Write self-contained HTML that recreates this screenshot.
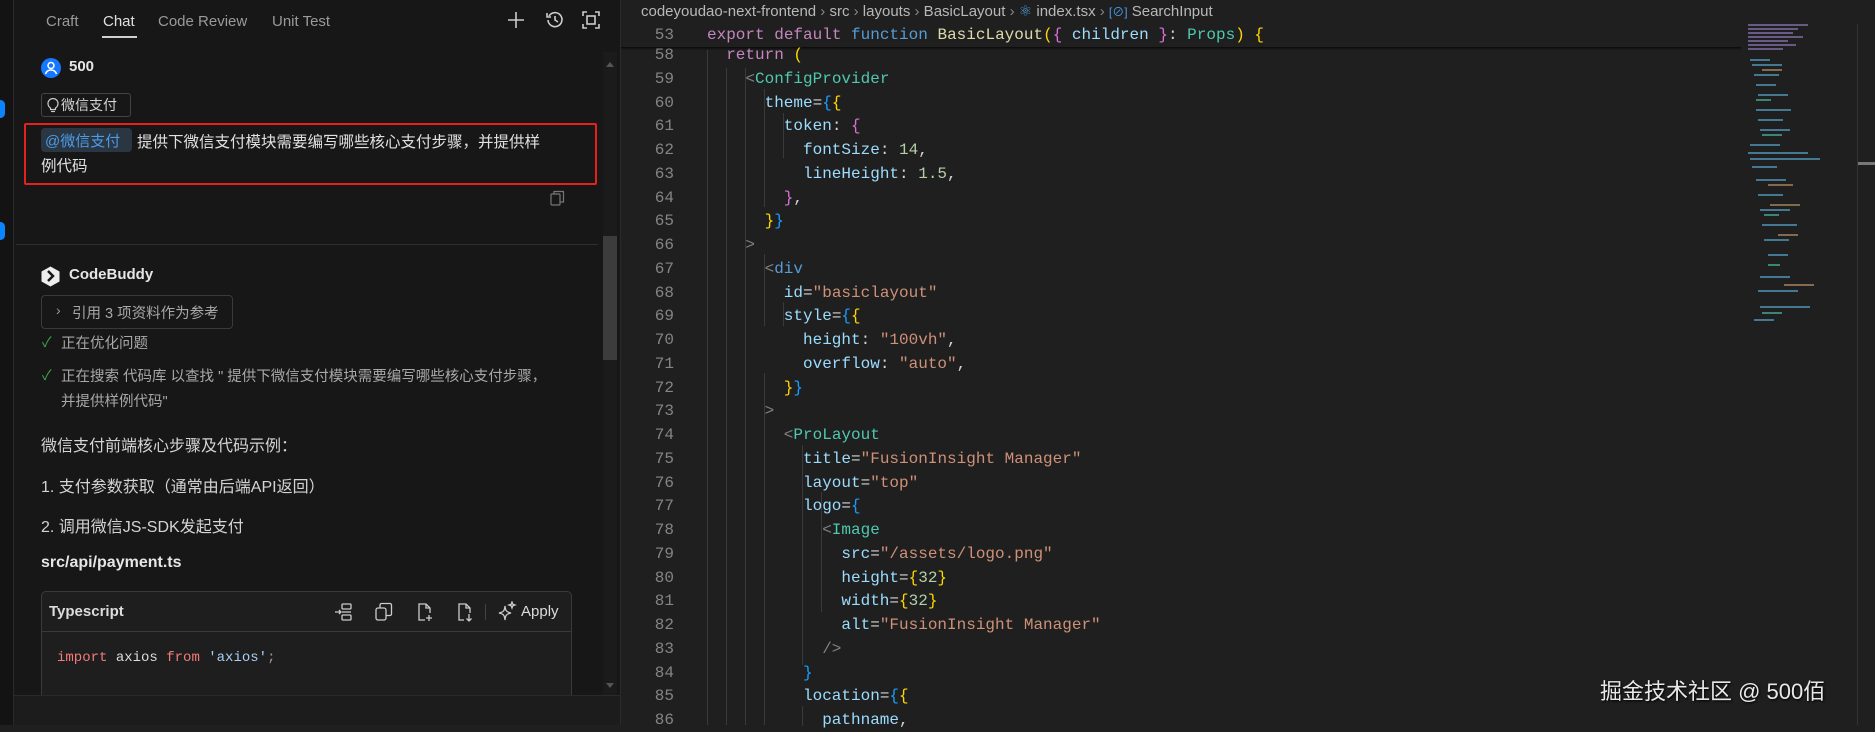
<!DOCTYPE html>
<html><head><meta charset="utf-8"><style>
*{margin:0;padding:0;box-sizing:border-box}
body{width:1875px;height:725px;overflow:hidden;background:#1f1f1f;position:relative;font-family:"Liberation Sans","Noto Sans CJK SC",sans-serif;color:#cccccc}
.a{position:absolute;white-space:nowrap}
#left{position:absolute;left:0;top:0;width:620px;height:725px;background:#171717}
.cn{font-size:16px;color:#d4d4d4}
.code{font-family:"Liberation Mono",monospace;font-size:16px;line-height:24px;white-space:pre}
.ln{position:absolute;width:40px;text-align:right;left:634px;color:#858585;font-family:"Liberation Mono",monospace;font-size:16px;line-height:24px}
.k{color:#c586c0}.f{color:#569cd6}.fn{color:#dcdcaa}.v{color:#9cdcfe}.t{color:#4ec9b0}.s{color:#ce9178}.n{color:#b5cea8}.g{color:#808080}.y{color:#ffd700}.p{color:#da70d6}.b{color:#179fff}.w{color:#d4d4d4}
.guide{position:absolute;width:1px;background:#3a3a3a}
</style></head><body>
<div id="left">
  <div class="a" style="left:0;top:0;width:14px;height:725px;background:#131313;border-right:1px solid #2a2a2a"></div>
  <div class="a" style="left:-4px;top:100px;width:9px;height:18px;border-radius:5px;background:#0a84ff"></div>
  <div class="a" style="left:-4px;top:222px;width:9px;height:18px;border-radius:5px;background:#0a84ff"></div>
  <div class="a" style="left:46px;top:13px;font-size:15px;color:#9a9a9a">Craft</div>
  <div class="a" style="left:103px;top:13px;font-size:15px;color:#e0e0e0">Chat</div>
  <div class="a" style="left:102px;top:36px;width:35px;height:2px;background:#d0d0d0"></div>
  <div class="a" style="left:158px;top:13px;font-size:15px;color:#9a9a9a">Code Review</div>
  <div class="a" style="left:272px;top:13px;font-size:15px;color:#9a9a9a">Unit Test</div>
  <svg class="a" style="left:507px;top:11px" width="18" height="18" viewBox="0 0 18 18"><path d="M9 1v16M1 9h16" stroke="#ccc" stroke-width="1.6"/></svg>
  <svg class="a" style="left:545px;top:10px" width="20" height="20" viewBox="0 0 20 20" fill="none" stroke="#ccc" stroke-width="1.6"><path d="M4 6A7 7 0 1 1 3 10"/><path d="M2 3v4h4"/><path d="M10 6v4l3 2"/></svg>
  <svg class="a" style="left:582px;top:11px" width="18" height="18" viewBox="0 0 18 18" fill="none" stroke="#ccc" stroke-width="1.6"><path d="M1 5V1h4M13 1h4v4M17 13v4h-4M5 17H1v-4"/><rect x="5" y="5" width="8" height="8"/></svg>
  <!-- scrollbar -->
  <div class="a" style="left:603px;top:52px;width:14px;height:643px;background:#1b1b1b"></div>
  <div class="a" style="left:603px;top:236px;width:14px;height:124px;background:#3c3c3c"></div>
  <div class="a" style="left:606px;top:62px;width:0;height:0;border-left:4px solid transparent;border-right:4px solid transparent;border-bottom:5px solid #555"></div>
  <div class="a" style="left:606px;top:683px;width:0;height:0;border-left:4px solid transparent;border-right:4px solid transparent;border-top:5px solid #555"></div>
  <!-- user -->
  <svg class="a" style="left:41px;top:58px" width="20" height="20" viewBox="0 0 20 20"><circle cx="10" cy="10" r="10" fill="#1677ff"/><circle cx="10" cy="7.5" r="3" fill="none" stroke="#fff" stroke-width="1.5"/><path d="M4.5 16c1-3 3-4 5.5-4s4.5 1 5.5 4" fill="none" stroke="#fff" stroke-width="1.5"/></svg>
  <div class="a" style="left:69px;top:58px;font-size:15px;font-weight:bold;color:#e6e6e6">500</div>
  <div class="a" style="left:41px;top:93px;width:90px;height:24px;border:1px solid #444;border-radius:3px"></div>
  <svg class="a" style="left:47px;top:98px" width="12" height="15" viewBox="0 0 12 15" fill="none" stroke="#ccc" stroke-width="1.2"><path d="M3.5 10C2 9 1 7.5 1 5.5a5 5 0 0 1 10 0C11 7.5 10 9 8.5 10v1.5h-5z"/><path d="M4 13.5h4"/></svg>
  <div class="a cn" style="left:61px;top:95px;font-size:14px">微信支付</div>
  <div class="a" style="left:24px;top:123px;width:573px;height:62px;border:2.5px solid #e6201c;border-radius:2px"></div>
  <div class="a" style="left:41px;top:128px;width:91px;height:24px;background:#2a3642;border-radius:4px"></div>
  <div class="a" style="left:45px;top:130px;font-size:15px;color:#4c9be8">@微信支付</div>
  <div class="a cn" style="left:137px;top:130px;font-size:15.5px;color:#e0e0e0">提供下微信支付模块需要编写哪些核心支付步骤，并提供样</div>
  <div class="a cn" style="left:41px;top:154px;font-size:15.5px;color:#e0e0e0">例代码</div>
  <svg class="a" style="left:550px;top:190px" width="15" height="16" viewBox="0 0 15 16" fill="none" stroke="#777" stroke-width="1.2"><rect x="1" y="4" width="9" height="11" rx="1"/><path d="M4 4V1.5h9.5V12H10"/></svg>
  <div class="a" style="left:16px;top:244px;width:582px;height:1px;background:#2e2e2e"></div>
  <!-- codebuddy -->
  <svg class="a" style="left:41px;top:266px" width="19" height="21" viewBox="0 0 19 21"><path d="M9.5 0.5L18.5 5.5V15.5L9.5 20.5L0.5 15.5V5.5Z" fill="#eee"/><path d="M7 5l5 5-5 5" fill="none" stroke="#171717" stroke-width="2.5"/></svg>
  <div class="a" style="left:69px;top:266px;font-size:15px;font-weight:bold;color:#e6e6e6">CodeBuddy</div>
  <div class="a" style="left:41px;top:295px;width:192px;height:34px;border:1px solid #3a3a3a;border-radius:4px"></div>
  <div class="a" style="left:56px;top:302px;font-size:14px;color:#999">›</div>
  <div class="a cn" style="left:72px;top:302px;font-size:14.5px;color:#a8a8a8">引用 3 项资料作为参考</div>
  <div class="a" style="left:42px;top:332px;font-size:14px;color:#3ea84a">✓</div>
  <div class="a cn" style="left:61px;top:332px;font-size:14.5px;color:#a8a8a8">正在优化问题</div>
  <div class="a" style="left:42px;top:365px;font-size:14px;color:#3ea84a">✓</div>
  <div class="a cn" style="left:61px;top:365px;font-size:14.5px;color:#a8a8a8">正在搜索 代码库 以查找 " 提供下微信支付模块需要编写哪些核心支付步骤，</div>
  <div class="a cn" style="left:61px;top:390px;font-size:14.5px;color:#a8a8a8">并提供样例代码"</div>
  <div class="a cn" style="left:41px;top:432px">微信支付前端核心步骤及代码示例：</div>
  <div class="a cn" style="left:41px;top:473px">1. 支付参数获取（通常由后端API返回）</div>
  <div class="a cn" style="left:41px;top:513px">2. 调用微信JS-SDK发起支付</div>
  <div class="a" style="left:41px;top:554px;font-size:16px;font-weight:bold;color:#e6e6e6">src/api/payment.ts</div>
  <div class="a" style="left:41px;top:591px;width:531px;height:120px;border:1px solid #3a3a3a;border-radius:5px;background:#1e1e1e"></div>
  <div class="a" style="left:42px;top:631px;width:529px;height:1px;background:#3a3a3a"></div>
  <div class="a" style="left:49px;top:603px;font-size:15px;font-weight:bold;color:#dcdcdc">Typescript</div>
  <svg class="a" style="left:334px;top:602px" width="20" height="20" viewBox="0 0 20 20" fill="none" stroke="#ccc" stroke-width="1.3"><path d="M1 10h6M5 8l2 2-2 2"/><rect x="8" y="2" width="9" height="5" rx="1"/><rect x="8" y="13" width="9" height="5" rx="1"/><path d="M8 10h9"/></svg>
  <svg class="a" style="left:375px;top:602px" width="18" height="20" viewBox="0 0 18 20" fill="none" stroke="#ccc" stroke-width="1.3"><rect x="1" y="6" width="10" height="12" rx="2"/><path d="M5 6V3a1.5 1.5 0 0 1 1.5-1.5H15A1.5 1.5 0 0 1 16.5 3v9a1.5 1.5 0 0 1-1.5 1.5h-4"/></svg>
  <svg class="a" style="left:416px;top:602px" width="18" height="20" viewBox="0 0 18 20" fill="none" stroke="#ccc" stroke-width="1.3"><path d="M9 18H3V2h7l4 4v5"/><path d="M10 2v4h4"/><path d="M13 13v6M10 16h6"/></svg>
  <svg class="a" style="left:456px;top:602px" width="18" height="20" viewBox="0 0 18 20" fill="none" stroke="#ccc" stroke-width="1.3"><path d="M8 18H3V2h7l4 4v5"/><path d="M10 2v4h4"/><path d="M13 12v7M10.5 16.5l2.5 2.5 2.5-2.5"/></svg>
  <div class="a" style="left:485px;top:604px;width:1px;height:16px;background:#444"></div>
  <svg class="a" style="left:497px;top:601px" width="20" height="22" viewBox="0 0 20 22" fill="none" stroke="#ccc" stroke-width="1.3"><path d="M8 5C8.5 10 9.5 11 14 12 9.5 13 8.5 14 8 19 7.5 14 6.5 13 2 12 6.5 11 7.5 10 8 5Z"/><path d="M15 1l.8 2.2L18 4l-2.2.8L15 7l-.8-2.2L12 4l2.2-.8Z"/></svg>
  <div class="a" style="left:521px;top:603px;font-size:15px;color:#dcdcdc">Apply</div>
  <div class="a" style="left:57px;top:650px;font-family:'Liberation Mono',monospace;font-size:14px;white-space:pre"><span style="color:#f27a7a">import</span><span style="color:#ddd"> axios </span><span style="color:#f27a7a">from</span> <span style="color:#a6d0f5">'axios'</span><span style="color:#999">;</span></div>
  <div class="a" style="left:14px;top:695px;width:606px;height:30px;background:#1c1c1c;border-top:1px solid #2a2a2a"></div>
</div>
<div class="a" style="left:620px;top:0;width:1px;height:725px;background:#2b2b2b"></div>
<!-- breadcrumb -->
<div class="a" style="left:641px;top:2px;font-size:15px;color:#b8b8b8">codeyoudao-next-frontend <span style="color:#888">›</span> src <span style="color:#888">›</span> layouts <span style="color:#888">›</span> BasicLayout <span style="color:#888">›</span> <span style="color:#4aa3df">⚛</span> index.tsx <span style="color:#888">›</span> <span style="color:#4c9be8;font-size:12px">[⊘]</span> SearchInput</div>
<div class="a" style="left:621px;top:47px;width:1120px;height:3px;background:linear-gradient(#0a0a0a,#1f1f1f)"></div>
<!-- guides -->
<div class="guide" style="left:707px;top:50px;height:675px"></div>
<div class="guide" style="left:726px;top:68px;height:657px"></div>
<div class="guide" style="left:745px;top:68px;height:657px"></div>
<div class="guide" style="left:764px;top:89px;height:118px"></div>
<div class="guide" style="left:783px;top:113px;height:45px"></div>
<div class="guide" style="left:764px;top:254px;height:72px"></div>
<div class="guide" style="left:783px;top:302px;height:24px"></div>
<div class="guide" style="left:764px;top:373px;height:352px"></div>
<div class="guide" style="left:802px;top:445px;height:220px"></div>
<div class="guide" style="left:821px;top:492px;height:120px"></div>
<div class="guide" style="left:802px;top:706px;height:20px"></div>
<div class="ln" style="top:23px">53</div>
<div class="a code" style="left:707px;top:23px"><span class="k">export</span> <span class="k">default</span> <span class="f">function</span> <span class="fn">BasicLayout</span><span class="y">(</span><span class="p">{</span> <span class="v">children</span> <span class="p">}</span><span class="w">:</span> <span class="t">Props</span><span class="y">)</span> <span class="y">{</span></div>
<div id="code"></div>
<!-- minimap -->
<svg class="a" style="left:1748px;top:24px" width="80" height="305">
<g fill="#7a6aa0" opacity=".8"><rect x="0" y="0" width="60" height="2"/><rect x="0" y="4" width="50" height="2"/><rect x="0" y="8" width="45" height="2"/><rect x="0" y="12" width="55" height="2"/><rect x="0" y="16" width="40" height="2"/><rect x="0" y="20" width="48" height="2"/><rect x="0" y="24" width="35" height="2"/></g>
<g fill="#4e8fb0" opacity=".8"><rect x="2" y="35" width="20" height="2"/><rect x="4" y="40" width="30" height="2"/><rect x="6" y="50" width="25" height="2"/><rect x="8" y="60" width="20" height="2"/><rect x="10" y="70" width="30" height="2"/><rect x="8" y="85" width="35" height="2"/><rect x="10" y="95" width="25" height="2"/><rect x="12" y="105" width="30" height="2"/><rect x="2" y="120" width="30" height="2"/><rect x="0" y="128" width="60" height="2"/><rect x="2" y="134" width="70" height="2"/><rect x="4" y="142" width="25" height="2"/><rect x="8" y="155" width="30" height="2"/><rect x="10" y="170" width="25" height="2"/><rect x="12" y="185" width="30" height="2"/><rect x="14" y="200" width="35" height="2"/><rect x="16" y="215" width="25" height="2"/><rect x="20" y="230" width="20" height="2"/><rect x="12" y="252" width="30" height="2"/><rect x="10" y="266" width="40" height="2"/><rect x="12" y="282" width="50" height="2"/><rect x="6" y="295" width="20" height="2"/></g>
<g fill="#b08a60" opacity=".7"><rect x="14" y="45" width="20" height="2"/><rect x="20" y="160" width="25" height="2"/><rect x="22" y="180" width="30" height="2"/><rect x="30" y="210" width="20" height="2"/><rect x="36" y="260" width="30" height="2"/></g>
<g fill="#4ec9b0" opacity=".6"><rect x="8" y="75" width="15" height="2"/><rect x="14" y="110" width="20" height="2"/><rect x="16" y="190" width="15" height="2"/><rect x="20" y="240" width="12" height="2"/><rect x="14" y="288" width="20" height="2"/></g>
</svg>
<div class="a" style="left:1857px;top:24px;width:1px;height:701px;background:#333"></div>
<div class="a" style="left:1858px;top:162px;width:17px;height:3px;background:#777"></div>
<div class="a" style="left:1600px;top:674px;font-size:22px;color:#e8e8e8;text-shadow:1px 1px 2px #000">掘金技术社区 @ 500佰</div>
<script>
var L=[
[58,2,'<span class="k">return</span> <span class="y">(</span>'],
[59,4,'<span class="g">&lt;</span><span class="t">ConfigProvider</span>'],
[60,6,'<span class="v">theme</span><span class="w">=</span><span class="b">{</span><span class="y">{</span>'],
[61,8,'<span class="v">token</span><span class="w">: </span><span class="p">{</span>'],
[62,10,'<span class="v">fontSize</span><span class="w">: </span><span class="n">14</span><span class="w">,</span>'],
[63,10,'<span class="v">lineHeight</span><span class="w">: </span><span class="n">1.5</span><span class="w">,</span>'],
[64,8,'<span class="p">}</span><span class="w">,</span>'],
[65,6,'<span class="y">}</span><span class="b">}</span>'],
[66,4,'<span class="g">&gt;</span>'],
[67,6,'<span class="g">&lt;</span><span class="f">div</span>'],
[68,8,'<span class="v">id</span><span class="w">=</span><span class="s">"basiclayout"</span>'],
[69,8,'<span class="v">style</span><span class="w">=</span><span class="b">{</span><span class="y">{</span>'],
[70,10,'<span class="v">height</span><span class="w">: </span><span class="s">"100vh"</span><span class="w">,</span>'],
[71,10,'<span class="v">overflow</span><span class="w">: </span><span class="s">"auto"</span><span class="w">,</span>'],
[72,8,'<span class="y">}</span><span class="b">}</span>'],
[73,6,'<span class="g">&gt;</span>'],
[74,8,'<span class="g">&lt;</span><span class="t">ProLayout</span>'],
[75,10,'<span class="v">title</span><span class="w">=</span><span class="s">"FusionInsight Manager"</span>'],
[76,10,'<span class="v">layout</span><span class="w">=</span><span class="s">"top"</span>'],
[77,10,'<span class="v">logo</span><span class="w">=</span><span class="b">{</span>'],
[78,12,'<span class="g">&lt;</span><span class="t">Image</span>'],
[79,14,'<span class="v">src</span><span class="w">=</span><span class="s">"/assets/logo.png"</span>'],
[80,14,'<span class="v">height</span><span class="w">=</span><span class="y">{</span><span class="n">32</span><span class="y">}</span>'],
[81,14,'<span class="v">width</span><span class="w">=</span><span class="y">{</span><span class="n">32</span><span class="y">}</span>'],
[82,14,'<span class="v">alt</span><span class="w">=</span><span class="s">"FusionInsight Manager"</span>'],
[83,12,'<span class="g">/&gt;</span>'],
[84,10,'<span class="b">}</span>'],
[85,10,'<span class="v">location</span><span class="w">=</span><span class="b">{</span><span class="y">{</span>'],
[86,12,'<span class="v">pathname</span><span class="w">,</span>']];
var h='';L.forEach(function(r){var y=Math.round(43+(r[0]-58)*23.75);
h+='<div class="ln" style="top:'+y+'px">'+r[0]+'</div><div class="a code" style="left:'+(707+r[1]*9.6)+'px;top:'+y+'px">'+r[2]+'</div>';});
document.getElementById('code').innerHTML=h;
</script>
</body></html>
